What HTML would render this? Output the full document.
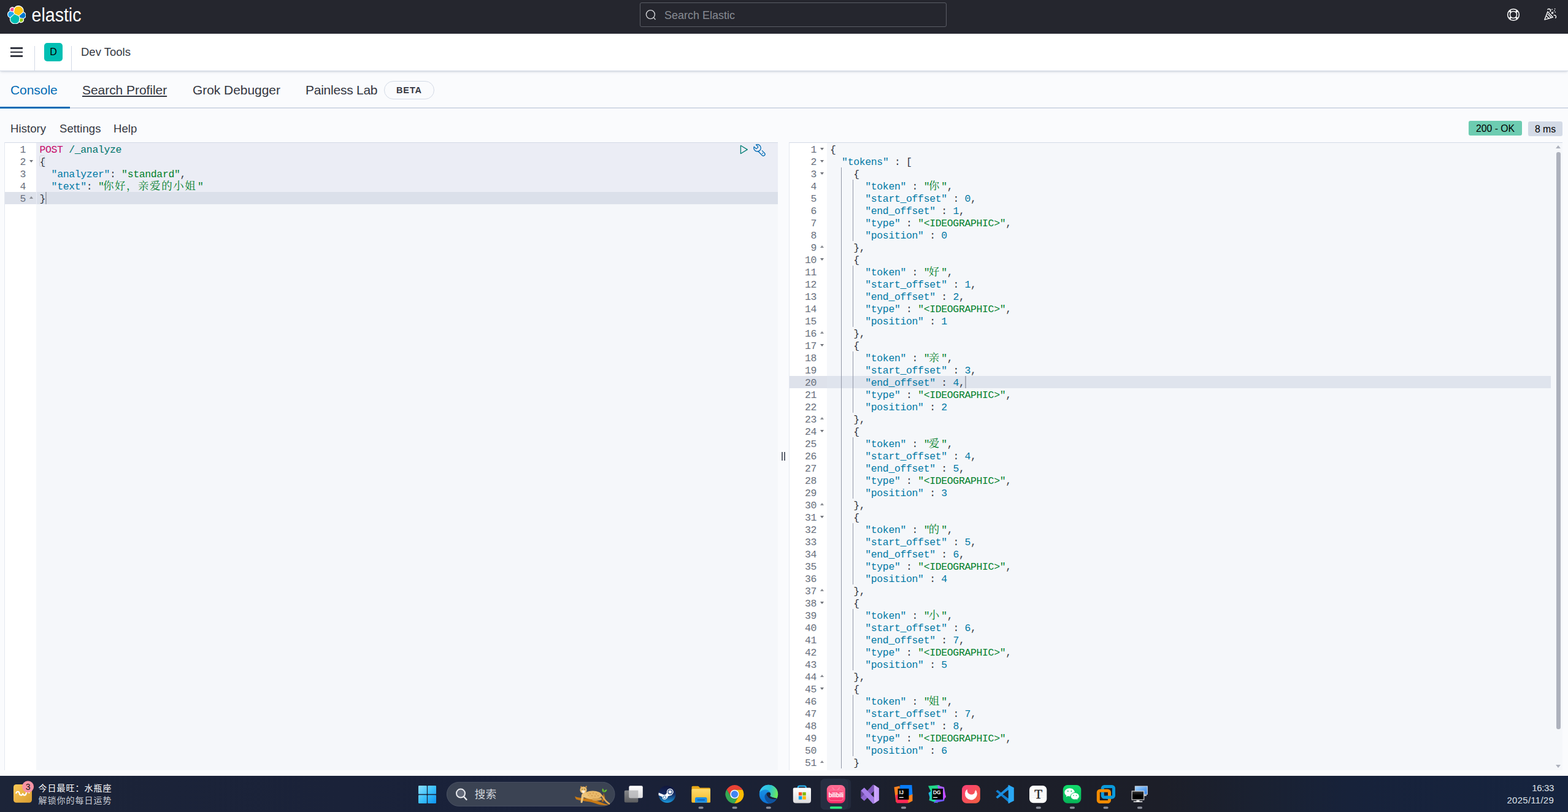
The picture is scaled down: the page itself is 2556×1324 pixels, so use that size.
<!DOCTYPE html>
<html lang="en">
<head>
<meta charset="utf-8">
<title>Dev Tools - Console - Elastic</title>
<style>
*{box-sizing:border-box}
html,body{margin:0;padding:0}
body{width:2556px;height:1324px;overflow:hidden;position:relative;background:#fafbfd;font-family:"Liberation Sans",sans-serif;color:#343741}
.abs{position:absolute}
svg.cjk{display:inline-block;vertical-align:top;overflow:visible}

/* ---------- top dark header ---------- */
#top{position:absolute;left:0;top:0;width:2556px;height:55px;background:#25262e}
#logo{position:absolute;left:11.7px;top:8.7px}
#wordmark{position:absolute;left:51px;top:6px;overflow:visible}
#search{position:absolute;left:1043px;top:4px;width:500px;height:40px;border:1.25px solid #5b5d66;border-radius:3px;background:#25262e}
#search span{position:absolute;left:39px;top:9px;font-size:18px;line-height:22px;color:#878a92;letter-spacing:0}
#search svg{position:absolute;left:6.8px;top:9.1px}

/* ---------- white sub header ---------- */
#sub{position:absolute;left:0;top:55px;width:2556px;height:61px;background:#fff;border-bottom:1px solid #d3dae6;box-shadow:0 2px 3px -1px rgba(152,162,179,.35),0 1px 6px -2px rgba(152,162,179,.3)}
#burger{position:absolute;left:17px;top:22px;width:20px;height:16px}
#burger i{position:absolute;left:0;width:20px;height:2.5px;background:#343741}
.vsep{position:absolute;top:20px;width:1px;height:41px;background:#d3dae6}
#avatar{position:absolute;left:72px;top:15px;width:30px;height:30px;border-radius:5px;background:#00bfb3;color:#000;font-size:16px;line-height:30px;text-align:center}
#crumb{position:absolute;left:132px;top:17.5px;font-size:18.5px;line-height:24px;color:#343741;letter-spacing:0}

/* ---------- tabs ---------- */
#tabs{position:absolute;left:0;top:117px;width:2556px;height:60px}
#tabs .line{position:absolute;left:0;top:58px;width:2556px;height:1.5px;background:#d3dae6}
#tabs .sel{position:absolute;left:0;top:57px;width:114px;height:2.5px;background:#006bb4}
.tab{position:absolute;top:16.5px;font-size:21px;line-height:26px;color:#343741;white-space:nowrap;letter-spacing:-0.05px}
#beta{position:absolute;left:626px;top:15px;width:82px;height:30px;border:1px solid #d3dae6;border-radius:15px;font-size:14.5px;font-weight:bold;line-height:28px;text-align:center;letter-spacing:0.9px;color:#343741}

/* ---------- toolbar ---------- */
.tool{position:absolute;top:199.3px;font-size:18.5px;line-height:22px;color:#343741;white-space:nowrap;letter-spacing:0.08px}
.badge{position:absolute;border-radius:3px;font-size:15.75px;line-height:25px;text-align:center;color:#000;white-space:nowrap}

/* ---------- editors ---------- */
.ed{position:absolute;top:232px;height:1024px;border-top:1px solid #d3dae6;border-left:1px solid #e4e8f0;background:#f5f7fa;overflow:hidden;font-family:"Liberation Mono",monospace;font-size:16.5px;letter-spacing:-0.36px;line-height:20px;color:#343741}
.gut{position:absolute;left:0;top:0;bottom:0;background:#fff}
.gl{position:relative;height:20px;color:#69707d}
.gl b{position:absolute;right:17px;top:2px;font-weight:normal;letter-spacing:-0.36px}
.gl.act{background:#dee2eb}
.gl i{position:absolute;right:5px;width:0;height:0;border-left:3.5px solid transparent;border-right:3.5px solid transparent}
.gl i.fd{top:8px;border-top:4.5px solid #70737a}
.gl i.fu{top:7px;border-bottom:4.5px solid #8a8d93}
.code{position:absolute;top:0;bottom:0;right:0}
.ln{height:20px;line-height:24px;white-space:pre;padding-left:var(--pl,5px);position:relative}
.m{color:#c80a68}.u{color:#00756c}.k{color:#0079a5}.s{color:#00802b}.n{color:#0079a5}.p{color:#343741}
.cj{display:inline-block;position:relative;height:20px;vertical-align:top}
.cjt{position:absolute;left:-1.6px;top:0.7px;font-family:"Liberation Mono","Noto Serif CJK SC",monospace;font-size:17.5px;line-height:21px;letter-spacing:1.55px;white-space:nowrap;color:#00802b}
.ig{position:absolute;width:1px;background:#9297a6}

/* ---------- taskbar ---------- */
#task{position:absolute;left:0;top:1265px;width:2556px;height:59px;background:linear-gradient(90deg,#1c2438 0%,#1a2239 22%,#19213a 36%,#1b2133 50%,#1c1f2a 60%,#1c1e28 74%,#1a2131 80%,#17223a 86%,#16243f 100%);overflow:hidden}
#gap{position:absolute;left:0;top:1256px;width:2556px;height:9px;background:#fbfcfd}
.tcj{font-family:"Liberation Sans","Noto Sans CJK SC",sans-serif;white-space:nowrap}
</style>
</head>
<body>

<!-- ======= dark global header ======= -->
<div id="top">
  <svg id="logo" width="30.6" height="30.6" viewBox="0 0 32 32">
    <path fill="#fff" d="M32 16.77a6.334 6.334 0 00-1.14-3.63 6.298 6.298 0 00-3.05-2.3A9.15 9.15 0 0027.98 9a8.976 8.976 0 00-1.7-5.28A9.008 9.008 0 0021.8.42 8.96 8.96 0 0016.24.39 9.08 9.08 0 0011.7 3.57a4.854 4.854 0 00-5.98-.1 4.85 4.85 0 00-1.7 5.7A6.4 6.4 0 00.99 11.5 6.372 6.372 0 000 15.2c0 1.3.4 2.57 1.15 3.64a6.33 6.33 0 003.05 2.3 8.99 8.99 0 001.53 7.13 8.96 8.96 0 004.48 3.28 8.96 8.96 0 005.56.03 9.04 9.04 0 004.52-3.2 4.84 4.84 0 005.97.11 4.83 4.83 0 001.7-5.7 6.4 6.4 0 003.04-2.32A6.38 6.38 0 0032 16.77"/>
    <path fill="#fec514" d="M12.58 13.787l7.002 3.211 7.066-6.213a7.849 7.849 0 00.152-1.557c0-4.287-3.483-7.775-7.764-7.775a7.76 7.76 0 00-6.406 3.388l-1.176 6.116 1.126 2.83z"/>
    <path fill="#00bfb3" d="M5.333 21.215a7.937 7.937 0 00-.151 1.58c0 4.3 3.492 7.797 7.785 7.797a7.768 7.768 0 006.425-3.407l1.166-6.096-1.556-2.985-7.03-3.215-6.64 6.326z"/>
    <path fill="#f04e98" d="M5.29 9.067l4.8 1.137L11.14 4.73a3.785 3.785 0 00-2.3-.78 3.813 3.813 0 00-3.806 3.81c0 .458.08.9.255 1.307"/>
    <path fill="#1ba9f5" d="M4.873 10.213a5.36 5.36 0 00-3.587 5.043 5.337 5.337 0 003.424 4.99l6.735-6.1-1.237-2.649-5.335-1.284z"/>
    <path fill="#93c90e" d="M20.88 27.184a3.76 3.76 0 002.293.78 3.813 3.813 0 003.807-3.81c0-.459-.08-.9-.255-1.307l-4.795-1.125-1.05 5.462z"/>
    <path fill="#0077cc" d="M21.857 20.563l5.28 1.237a5.381 5.381 0 003.587-5.05 5.347 5.347 0 00-3.432-4.994l-6.906 6.066 1.471 2.741z"/>
  </svg>
  <svg id="wordmark" role="img" aria-label="elastic" width="90" height="34" viewBox="0 0 90 34"><title>elastic</title><text x="0.5" y="28.8" font-family="Liberation Sans, sans-serif" font-size="30.8" fill="#fff" textLength="81" lengthAdjust="spacingAndGlyphs">elastic</text></svg>
  <div id="search">
    <svg width="22" height="22" viewBox="0 0 22 22" fill="none" stroke="#d4d5d8" stroke-width="1.4"><circle cx="9.4" cy="9.6" r="7"/><path d="M14.6 14.6l2.8 3.4"/></svg>
    <span>Search Elastic</span>
  </div>

  <!-- help (lifebuoy) -->
  <svg class="abs" style="left:2455px;top:12px" width="24" height="24" viewBox="-12 -12 24 24" fill="none" stroke="#fff">
    <circle r="9.35" stroke-width="1.5"/><circle r="5.5" stroke-width="1.4"/>
    <g stroke-width="2.9"><path d="M4.2 4.2L6.4 6.4M-4.2 4.2L-6.4 6.4M4.2 -4.2L6.4 -6.4M-4.2 -4.2L-6.4 -6.4"/></g>
  </svg>
  <!-- newsfeed (cheer) -->
  <svg class="abs" style="left:2515px;top:12px" width="24" height="24" viewBox="0 0 24 24" fill="none" stroke="#fff" stroke-width="1.4" stroke-linecap="round" stroke-linejoin="round">
    <path d="M7.9 6.9L16.4 16.2L2.9 20.1Z"/>
    <path d="M6.3 14.6L9.9 18M8.4 11.2L13.4 16.6"/>
    <path d="M7.9 3.4a2.6 2.6 0 0 1 4 3.4"/>
    <path d="M18.2 12.9a2.6 2.6 0 0 1 2.5 4.4"/>
    <path d="M14.6 10l2.3-2.4M14.7 7.7v2.3h2.3" stroke-width="1.2"/>
    <path d="M15 3.4h.1M19.6 2.5h.1M18.8 5.4h.1M20.2 7.8h.1" stroke-width="1.6"/>
  </svg>
</div>

<!-- ======= white header with breadcrumb ======= -->
<div id="sub">
  <div id="burger"><i style="top:0"></i><i style="top:6.5px"></i><i style="top:13px"></i></div>
  <div class="vsep" style="left:56px"></div>
  <div id="avatar">D</div>
  <div class="vsep" style="left:116px"></div>
  <div id="crumb">Dev Tools</div>
</div>

<!-- ======= tabs ======= -->
<div id="tabs">
  <div class="line"></div><div class="sel"></div>
  <div class="tab" style="left:17px;color:#006bb4">Console</div>
  <div class="tab" style="left:134px;text-decoration:underline;text-underline-offset:1.5px;text-decoration-thickness:1.5px">Search Profiler</div>
  <div class="tab" style="left:314px">Grok Debugger</div>
  <div class="tab" style="left:498px;letter-spacing:-0.25px">Painless Lab</div>
  <div id="beta">BETA</div>
</div>

<!-- ======= console toolbar ======= -->
<div class="tool" style="left:17px">History</div>
<div class="tool" style="left:97px">Settings</div>
<div class="tool" style="left:185px">Help</div>
<div class="badge" style="left:2394px;top:197px;width:87px;height:24px;background:#6dccb1">200 - OK</div>
<div class="badge" style="left:2491px;top:198px;width:56px;height:24px;background:#d3dae6">8 ms</div>

<!-- ======= request editor ======= -->
<div class="ed" style="left:7px;width:1261px">
  <div class="gut" style="width:51px"><div class="gl"><b>1</b></div><div class="gl"><b>2</b><i class="fd"></i></div><div class="gl"><b>3</b></div><div class="gl"><b>4</b></div><div class="gl act"><b>5</b><i class="fu"></i></div></div>
  <div class="code" style="left:51px;--pl:5.5px">
    <div class="abs" style="left:0;top:0;right:0;height:100px;background:#ebedf5"></div>
    <div class="abs" style="left:1.2px;top:80px;right:0;height:20px;background:#dbe0ea"></div>
    <div class="abs" style="left:4.8px;top:19.5px;width:9px;height:19px;border:1px solid #d2d5de;border-radius:3px"></div>
    <div class="abs" style="left:15px;top:80px;width:1.9px;height:20px;background:#a6aab5"></div>
    <div class="abs" style="left:0;top:0;right:0"><div class="ln"><span class="m">POST</span> <span class="u">/_analyze</span></div><div class="ln"><span class="p">{</span></div><div class="ln">  <span class="k">"analyzer"</span><span class="p">: </span><span class="s">"standard"</span><span class="p">,</span></div><div class="ln">  <span class="k">"text"</span><span class="p">: </span><span class="s">"</span><span class="cj" style="width:152.40px"><span class="cjt">你好，亲爱的小姐</span></span><span class="s">"</span></div><div class="ln act"><span class="p">}</span></div></div>

    <!-- send request / wrench actions -->
    <svg class="abs" style="left:1147px;top:2px" width="16" height="18" viewBox="0 0 16 18" fill="none" stroke="#017d73" stroke-width="1.3" stroke-linejoin="round"><path d="M1.4 2.3L12.3 8.9L1.4 15.5Z"/></svg>
    <svg class="abs" style="left:1169px;top:2px" width="21" height="21" viewBox="0 0 21 21" fill="none" stroke="#006bb4" stroke-width="1.3" stroke-linejoin="round" stroke-linecap="round">
      <path d="M4.4 1.0L7.3 3.9Q8.1 4.7 7.3 5.5L5.7 7.1Q4.9 7.9 4.1 7.1L1.2 4.2A5.7 5.7 0 1 0 4.4 1.0Z"/>
      <path d="M14.3 10.6L18.4 14.7A2.7 2.7 0 0 1 14.6 18.5L7.9 11.8"/>
      <circle cx="15.1" cy="15.1" r="0.9" fill="#006bb4" stroke="none"/>
    </svg>
  </div>
</div>

<!-- ======= resizer ======= -->
<div class="abs" style="left:1274.3px;top:737px;width:1.4px;height:14px;background:#5f6571"></div>
<div class="abs" style="left:1278.3px;top:737px;width:1.4px;height:14px;background:#5f6571"></div>

<!-- ======= response editor ======= -->
<div class="ed" style="left:1286px;width:1261px">
  <div class="gut" style="width:61px"><div class="gl"><b>1</b><i class="fd"></i></div><div class="gl"><b>2</b><i class="fd"></i></div><div class="gl"><b>3</b><i class="fd"></i></div><div class="gl"><b>4</b></div><div class="gl"><b>5</b></div><div class="gl"><b>6</b></div><div class="gl"><b>7</b></div><div class="gl"><b>8</b></div><div class="gl"><b>9</b><i class="fu"></i></div><div class="gl"><b>10</b><i class="fd"></i></div><div class="gl"><b>11</b></div><div class="gl"><b>12</b></div><div class="gl"><b>13</b></div><div class="gl"><b>14</b></div><div class="gl"><b>15</b></div><div class="gl"><b>16</b><i class="fu"></i></div><div class="gl"><b>17</b><i class="fd"></i></div><div class="gl"><b>18</b></div><div class="gl"><b>19</b></div><div class="gl act"><b>20</b></div><div class="gl"><b>21</b></div><div class="gl"><b>22</b></div><div class="gl"><b>23</b><i class="fu"></i></div><div class="gl"><b>24</b><i class="fd"></i></div><div class="gl"><b>25</b></div><div class="gl"><b>26</b></div><div class="gl"><b>27</b></div><div class="gl"><b>28</b></div><div class="gl"><b>29</b></div><div class="gl"><b>30</b><i class="fu"></i></div><div class="gl"><b>31</b><i class="fd"></i></div><div class="gl"><b>32</b></div><div class="gl"><b>33</b></div><div class="gl"><b>34</b></div><div class="gl"><b>35</b></div><div class="gl"><b>36</b></div><div class="gl"><b>37</b><i class="fu"></i></div><div class="gl"><b>38</b><i class="fd"></i></div><div class="gl"><b>39</b></div><div class="gl"><b>40</b></div><div class="gl"><b>41</b></div><div class="gl"><b>42</b></div><div class="gl"><b>43</b></div><div class="gl"><b>44</b><i class="fu"></i></div><div class="gl"><b>45</b><i class="fd"></i></div><div class="gl"><b>46</b></div><div class="gl"><b>47</b></div><div class="gl"><b>48</b></div><div class="gl"><b>49</b></div><div class="gl"><b>50</b></div><div class="gl"><b>51</b><i class="fu"></i></div></div>
  <div class="code" style="left:61px;--pl:5px">
    <div class="abs" style="left:0;top:380px;right:19px;height:20px;background:#dfe4ed"></div>
    <div class="abs" style="left:0;top:0;right:0"><i class="ig" style="left:23.4px;top:40px;height:980px"></i><i class="ig" style="left:42.2px;top:60px;height:100px"></i><i class="ig" style="left:42.2px;top:200px;height:100px"></i><i class="ig" style="left:42.2px;top:340px;height:100px"></i><i class="ig" style="left:42.2px;top:480px;height:100px"></i><i class="ig" style="left:42.2px;top:620px;height:100px"></i><i class="ig" style="left:42.2px;top:760px;height:100px"></i><i class="ig" style="left:42.2px;top:900px;height:100px"></i></div>
    <div class="abs" style="left:0;top:0;right:0"><div class="ln"><span class="p">{</span></div><div class="ln">  <span class="k">"tokens"</span><span class="p"> : [</span></div><div class="ln">    <span class="p">{</span></div><div class="ln">      <span class="k">"token"</span><span class="p"> : </span><span class="s">"</span><span class="cj" style="width:19.05px"><span class="cjt">你</span></span><span class="s">"</span><span class="p">,</span></div><div class="ln">      <span class="k">"start_offset"</span><span class="p"> : </span><span class="n">0</span><span class="p">,</span></div><div class="ln">      <span class="k">"end_offset"</span><span class="p"> : </span><span class="n">1</span><span class="p">,</span></div><div class="ln">      <span class="k">"type"</span><span class="p"> : </span><span class="s">"&lt;IDEOGRAPHIC&gt;"</span><span class="p">,</span></div><div class="ln">      <span class="k">"position"</span><span class="p"> : </span><span class="n">0</span></div><div class="ln">    <span class="p">},</span></div><div class="ln">    <span class="p">{</span></div><div class="ln">      <span class="k">"token"</span><span class="p"> : </span><span class="s">"</span><span class="cj" style="width:19.05px"><span class="cjt">好</span></span><span class="s">"</span><span class="p">,</span></div><div class="ln">      <span class="k">"start_offset"</span><span class="p"> : </span><span class="n">1</span><span class="p">,</span></div><div class="ln">      <span class="k">"end_offset"</span><span class="p"> : </span><span class="n">2</span><span class="p">,</span></div><div class="ln">      <span class="k">"type"</span><span class="p"> : </span><span class="s">"&lt;IDEOGRAPHIC&gt;"</span><span class="p">,</span></div><div class="ln">      <span class="k">"position"</span><span class="p"> : </span><span class="n">1</span></div><div class="ln">    <span class="p">},</span></div><div class="ln">    <span class="p">{</span></div><div class="ln">      <span class="k">"token"</span><span class="p"> : </span><span class="s">"</span><span class="cj" style="width:19.05px"><span class="cjt">亲</span></span><span class="s">"</span><span class="p">,</span></div><div class="ln">      <span class="k">"start_offset"</span><span class="p"> : </span><span class="n">3</span><span class="p">,</span></div><div class="ln act">      <span class="k">"end_offset"</span><span class="p"> : </span><span class="n">4</span><span class="p">,</span></div><div class="ln">      <span class="k">"type"</span><span class="p"> : </span><span class="s">"&lt;IDEOGRAPHIC&gt;"</span><span class="p">,</span></div><div class="ln">      <span class="k">"position"</span><span class="p"> : </span><span class="n">2</span></div><div class="ln">    <span class="p">},</span></div><div class="ln">    <span class="p">{</span></div><div class="ln">      <span class="k">"token"</span><span class="p"> : </span><span class="s">"</span><span class="cj" style="width:19.05px"><span class="cjt">爱</span></span><span class="s">"</span><span class="p">,</span></div><div class="ln">      <span class="k">"start_offset"</span><span class="p"> : </span><span class="n">4</span><span class="p">,</span></div><div class="ln">      <span class="k">"end_offset"</span><span class="p"> : </span><span class="n">5</span><span class="p">,</span></div><div class="ln">      <span class="k">"type"</span><span class="p"> : </span><span class="s">"&lt;IDEOGRAPHIC&gt;"</span><span class="p">,</span></div><div class="ln">      <span class="k">"position"</span><span class="p"> : </span><span class="n">3</span></div><div class="ln">    <span class="p">},</span></div><div class="ln">    <span class="p">{</span></div><div class="ln">      <span class="k">"token"</span><span class="p"> : </span><span class="s">"</span><span class="cj" style="width:19.05px"><span class="cjt">的</span></span><span class="s">"</span><span class="p">,</span></div><div class="ln">      <span class="k">"start_offset"</span><span class="p"> : </span><span class="n">5</span><span class="p">,</span></div><div class="ln">      <span class="k">"end_offset"</span><span class="p"> : </span><span class="n">6</span><span class="p">,</span></div><div class="ln">      <span class="k">"type"</span><span class="p"> : </span><span class="s">"&lt;IDEOGRAPHIC&gt;"</span><span class="p">,</span></div><div class="ln">      <span class="k">"position"</span><span class="p"> : </span><span class="n">4</span></div><div class="ln">    <span class="p">},</span></div><div class="ln">    <span class="p">{</span></div><div class="ln">      <span class="k">"token"</span><span class="p"> : </span><span class="s">"</span><span class="cj" style="width:19.05px"><span class="cjt">小</span></span><span class="s">"</span><span class="p">,</span></div><div class="ln">      <span class="k">"start_offset"</span><span class="p"> : </span><span class="n">6</span><span class="p">,</span></div><div class="ln">      <span class="k">"end_offset"</span><span class="p"> : </span><span class="n">7</span><span class="p">,</span></div><div class="ln">      <span class="k">"type"</span><span class="p"> : </span><span class="s">"&lt;IDEOGRAPHIC&gt;"</span><span class="p">,</span></div><div class="ln">      <span class="k">"position"</span><span class="p"> : </span><span class="n">5</span></div><div class="ln">    <span class="p">},</span></div><div class="ln">    <span class="p">{</span></div><div class="ln">      <span class="k">"token"</span><span class="p"> : </span><span class="s">"</span><span class="cj" style="width:19.05px"><span class="cjt">姐</span></span><span class="s">"</span><span class="p">,</span></div><div class="ln">      <span class="k">"start_offset"</span><span class="p"> : </span><span class="n">7</span><span class="p">,</span></div><div class="ln">      <span class="k">"end_offset"</span><span class="p"> : </span><span class="n">8</span><span class="p">,</span></div><div class="ln">      <span class="k">"type"</span><span class="p"> : </span><span class="s">"&lt;IDEOGRAPHIC&gt;"</span><span class="p">,</span></div><div class="ln">      <span class="k">"position"</span><span class="p"> : </span><span class="n">6</span></div><div class="ln">    <span class="p">}</span></div></div>
    <div class="abs" style="left:225px;top:380px;width:1.9px;height:20px;background:#a6aab5"></div>
    <!-- scrollbar -->
    <div class="abs" style="right:3.3px;top:15px;width:6.6px;height:941px;border-radius:3.3px;background:#adb1bc"></div>
    <div class="abs" style="right:2.8px;top:3.8px;width:0;height:0;border-left:4.2px solid transparent;border-right:4.2px solid transparent;border-bottom:5.5px solid #adb1bc"></div>
    <div class="abs" style="right:2.8px;top:1014.2px;width:0;height:0;border-left:4.2px solid transparent;border-right:4.2px solid transparent;border-top:5.5px solid #adb1bc"></div>
  </div>
</div>

<!-- ======= windows taskbar ======= -->
<div id="gap"></div>
<div id="task">
  <div class="abs tcj" style="left:62.5px;top:11.3px;line-height:18px;font-size:14px;letter-spacing:1px;color:#ffffff">今日最旺：水瓶座</div>
  <div class="abs tcj" style="left:62.5px;top:31.3px;line-height:18px;font-size:14px;letter-spacing:1px;color:#c9cdd6">解锁你的每日运势</div>
  <svg class="abs" style="left:0;top:0" width="2556" height="59" viewBox="0 0 2556 59" font-family="Liberation Sans, sans-serif">
<defs>
<linearGradient id="gGold" x1="0" y1="0" x2="1" y2="1"><stop offset="0" stop-color="#fbc957"/><stop offset="1" stop-color="#d89c31"/></linearGradient>
<linearGradient id="gWin" gradientUnits="userSpaceOnUse" x1="682" y1="16" x2="711" y2="45"><stop offset="0" stop-color="#8ee0ff"/><stop offset=".5" stop-color="#3cc0fa"/><stop offset="1" stop-color="#0c93f1"/></linearGradient>
<linearGradient id="gSteam" x1="0" y1="0" x2="0" y2="1"><stop offset="0" stop-color="#11163a"/><stop offset=".5" stop-color="#142c63"/><stop offset="1" stop-color="#1b9be0"/></linearGradient>
<linearGradient id="gFold" x1="0" y1="0" x2="0" y2="1"><stop offset="0" stop-color="#ffdb6e"/><stop offset="1" stop-color="#f6ba27"/></linearGradient>
<linearGradient id="gWhite" x1="0" y1="0" x2="0" y2="1"><stop offset="0" stop-color="#ffffff"/><stop offset="1" stop-color="#dcdcde"/></linearGradient>
<linearGradient id="gGray" x1="0" y1="0" x2="0" y2="1"><stop offset="0" stop-color="#86878a"/><stop offset="1" stop-color="#5c5d60"/></linearGradient>
<linearGradient id="gEdgeB" x1="0" y1="0" x2="0" y2="1"><stop offset="0" stop-color="#1e9fea"/><stop offset="1" stop-color="#0a6fd2"/></linearGradient>
<linearGradient id="gEdgeT" gradientUnits="userSpaceOnUse" x1="-15" y1="-6" x2="15" y2="2"><stop offset="0" stop-color="#3ac6f6"/><stop offset=".5" stop-color="#2bc4d4"/><stop offset=".8" stop-color="#56dc86"/><stop offset="1" stop-color="#72f248"/></linearGradient>
<linearGradient id="gBili" x1="0" y1="0" x2="0" y2="1"><stop offset="0" stop-color="#ff7096"/><stop offset="1" stop-color="#fb2a68"/></linearGradient>
<linearGradient id="gRed" x1="0" y1="0" x2="1" y2="1"><stop offset="0" stop-color="#fb3f77"/><stop offset="1" stop-color="#f2603f"/></linearGradient>
<linearGradient id="gWx" x1="0" y1="0" x2="0" y2="1"><stop offset="0" stop-color="#12dc6c"/><stop offset="1" stop-color="#06b457"/></linearGradient>
<linearGradient id="gMon" x1="0" y1="0" x2="1" y2="1"><stop offset="0" stop-color="#a7d8ff"/><stop offset="1" stop-color="#2f7fe6"/></linearGradient>
<linearGradient id="gMonB" x1="0" y1="0" x2="0" y2="1"><stop offset="0" stop-color="#3a3a3a"/><stop offset=".5" stop-color="#000"/><stop offset="1" stop-color="#000"/></linearGradient>
</defs>
<rect x="22" y="14" width="30" height="29.8" rx="4.5" fill="url(#gGold)"/>
<path d="M26.3 28.2c1-3.2 4.6-3.2 5.2 0c.5 4.6 5.4 4.6 5.6 0c.3 4.6 5.2 4.6 5.6 0c.4-3 3.6-3 4.8-.6" fill="none" stroke="#fff" stroke-width="2.1" stroke-linecap="round"/>
<circle cx="45.6" cy="17.7" r="9.5" fill="#f793a4"/>
<text x="45.6" y="22.6" font-size="14" text-anchor="middle" fill="#1a1a1a">3</text>
<rect x="682.00" y="16.00" width="13.85" height="13.85" rx="1.2" fill="url(#gWin)"/>
<rect x="697.15" y="16.00" width="13.85" height="13.85" rx="1.2" fill="url(#gWin)"/>
<rect x="682.00" y="31.15" width="13.85" height="13.85" rx="1.2" fill="url(#gWin)"/>
<rect x="697.15" y="31.15" width="13.85" height="13.85" rx="1.2" fill="url(#gWin)"/>
<rect x="728.4" y="10.4" width="273.6" height="39" rx="19.5" fill="#3b4353" stroke="#4e5667" stroke-width=".9"/>
<circle cx="751" cy="28.6" r="7" fill="#626979" stroke="#e9eaee" stroke-width="2"/><path d="M756.4 34.4l4 4.4" stroke="#e9eaee" stroke-width="2.4" stroke-linecap="round"/>
<g>
<path d="M937 33.5c8 4 20 2 30 5c8 2.4 16 7 25 8.8c-6 1.6-14 .4-22-2.6c-10-3.6-22-3-31-6.400z" fill="#c87a16"/>
<path d="M984 27.500l2.200 8-3 7.500-2.600-1.500 2.400-6.500z" fill="#b9711b"/>
<path d="M983.600 27c-2.400-2-2.400-4.600-1.400-6.600c2.200 1.200 3 3.800 1.400 6.600zM984.400 27c.4-3 2.400-4.600 5-4.800c0 2.600-2 4.600-5 4.800z" fill="#67c22c"/>
<path d="M979.500 31c3 2 5 7 8.500 10.500c2 2 4 3.400 5 4" fill="none" stroke="#e0a856" stroke-width="2.6" stroke-linecap="round"/>
<ellipse cx="966" cy="31.500" rx="14.5" ry="7" fill="#e9b96a"/>
<path d="M955 27c-3 0-6 1.500-7 4l-1.500 11.500c-.2 2 2.600 2.200 3 .4l2-8c3 1.600 7 1.800 10 .6z" fill="#efc47a"/>
<path d="M966 36.500c4 .6 10 .4 14-1l1.500 3.500c-4 1.800-11 2.200-16 1z" fill="#d9a352"/>
<circle cx="951" cy="23" r="5.600" fill="#ecbd70"/><path d="M946 19.500l.8-3 2.600 1.800zM953.800 18l2.400-2 .6 3.400z" fill="#d99d45"/>
<path d="M948.200 24.500c1.600-1 4-1 5.600 0c-.4 2.600-1.400 3.800-2.800 3.800s-2.400-1.200-2.800-3.800z" fill="#fbeed8"/>
<circle cx="949" cy="22" r=".7" fill="#3d5a1e"/><circle cx="953" cy="22" r=".7" fill="#3d5a1e"/>
<g fill="#b9782a"><circle cx="962" cy="29" r=".7"/><circle cx="967" cy="28" r=".7"/><circle cx="972" cy="29.500" r=".7"/><circle cx="965" cy="32.500" r=".7"/><circle cx="970" cy="33" r=".7"/><circle cx="975" cy="32.500" r=".7"/><circle cx="959" cy="32" r=".6"/></g>
</g>
<rect x="1017.8" y="23.8" width="22.5" height="19.600" rx="2" fill="url(#gGray)"/>
<rect x="1025.3" y="16.300" width="22.5" height="20" rx="2.200" fill="url(#gWhite)"/>
<path d="M1025.3 23.800h15v10.500q0 2-2 2h-13z" fill="#9c9da0" opacity=".55"/>
<circle cx="1087.5" cy="30" r="14" fill="url(#gSteam)"/>
<clipPath id="cSt"><circle cx="1087.5" cy="30" r="14"/></clipPath>
<g clip-path="url(#cSt)"><path d="M1072 26.800l10.400 4.300a4 4 0 0 1 2.600-.5l3.600-5.200h3.600l3 5.800-6.600 2.200a4 4 0 0 1-7.800 1.400l-8.800-3.600z" fill="#fff"/></g>
<circle cx="1092.3" cy="26.200" r="5.400" fill="#fff"/><circle cx="1092.3" cy="26.200" r="3.300" fill="none" stroke="#1b3e7c" stroke-width="1.300"/>
<circle cx="1083.300" cy="35" r="3.700" fill="#fff"/><circle cx="1083.300" cy="35" r="2.300" fill="none" stroke="#1c6fb4" stroke-width=".9"/>
<path d="M1127.5 18.600q0-1.800 1.800-1.800h8.200q1 0 1.700.8l1.800 1.900h15.200q1.800 0 1.800 1.800v20.600h-30.500z" fill="#e8a817"/>
<rect x="1127.5" y="21.300" width="30.500" height="22.500" rx="1.600" fill="url(#gFold)"/>
<path d="M1133 43.800v-6.300q0-2.500 2.500-2.500h14.500q2.500 0 2.500 2.500v6.300z" fill="#1d90e6"/><rect x="1136.500" y="38.600" width="12.500" height="1.700" rx=".8" fill="#0b5cb3"/>
<rect x="1138.50" y="50.2" width="8.20" height="3.6" rx="1.8" fill="#8b8f9a"/>
<path d="M1184.63 22.30 A15.00 15.00 0 0 1 1210.60 22.70 L1197.50 22.70 A7.30 7.30 0 0 0 1191.18 33.65 Z" fill="#e94235"/><path d="M1197.27 45.00 A15.00 15.00 0 0 1 1184.63 22.30 L1191.18 33.65 A7.30 7.30 0 0 0 1203.82 33.65 Z" fill="#34a853"/><path d="M1210.60 22.70 A15.00 15.00 0 0 1 1197.27 45.00 L1203.82 33.65 A7.30 7.30 0 0 0 1197.50 22.70 Z" fill="#fbbc04"/><circle cx="1197.50" cy="30.00" r="7.30" fill="#fff"/><circle cx="1197.50" cy="30.00" r="5.75" fill="#4285f4"/>
<rect x="1193.50" y="50.2" width="8.20" height="3.6" rx="1.8" fill="#8b8f9a"/>
<g transform="translate(1252.95 29.95)">
<circle r="15.2" fill="url(#gEdgeB)"/>
<path d="M-14.9-3A15.2 15.2 0 1 1 13.3 7.3C10.8 5.6 6 5.8 2.5 3.200C3.600 1.500 3.400-1 2.500-3.200C1-5.500-1-6.700-3.500-7.300C-7-8.200-11.500-6.800-14.900-3Z" fill="url(#gEdgeT)"/>
<path d="M-3.200-1.900C-6 .5-7.200 3-6.200 6.400C-5.300 10-2.500 13.500.6 14.900A15.200 15.200 0 0 0 12.900 7.900C9 8.600 4 8 .5 6.200C-1.500 5-2.600 2.800-2.900 1.300Z" fill="#10519b"/>
<circle cx="0" cy=".1" r="3.250" fill="#1b2235"/><path d="M-2.900 1.300C-2.500 2.500-1 5 .5 6.200C4 8 9 8.600 12.900 7.900L13.400 7C10.800 5.600 6 5.800 2.500 3.200Z" fill="#1b2235"/>
</g>
<rect x="1248.70" y="50.2" width="8.20" height="3.6" rx="1.8" fill="#8b8f9a"/>
<path d="M1300.800 22v-2.800q0-2.600 2.600-2.600h7.800q2.600 0 2.600 2.600v2.800" fill="none" stroke="#2ab0ec" stroke-width="2.200"/>
<path d="M1292.800 21.600q0-2 2-2h25.200q2 0 2 2v18.500q0 4.500-4.500 4.500h-20.200q-4.500 0-4.500-4.500z" fill="url(#gWhite)"/>
<rect x="1301.900" y="26.800" width="5.400" height="5.400" fill="#f25022"/><rect x="1308.300" y="26.800" width="5.400" height="5.400" fill="#7fba00"/><rect x="1301.900" y="33.200" width="5.400" height="5.400" fill="#00a4ef"/><rect x="1308.300" y="33.200" width="5.400" height="5.400" fill="#ffb900"/>
<rect x="1344" y="5.200" width="43.200" height="49.500" rx="6" fill="#232a3c"/>
<rect x="1338.200" y="5.200" width="43.200" height="49.500" rx="6" fill="#262e41" stroke="#2d3548" stroke-width=".8"/>
<rect x="1347.800" y="15" width="30" height="29.700" rx="7.500" fill="url(#gBili)"/>
<path d="M1357 19.500l3 3.200M1368.500 19.500l-3 3.200" stroke="#ff8fae" stroke-width="1.300" stroke-linecap="round"/><rect x="1351.300" y="23" width="23" height="17.500" rx="4" fill="none" stroke="#ff86a6" stroke-width="1.100" opacity=".8"/>
<text x="1362.800" y="35.300" font-size="10" font-weight="bold" text-anchor="middle" fill="#fff" letter-spacing="-.3" textLength="24" lengthAdjust="spacingAndGlyphs">bilibili</text>
<rect x="1352.800" y="50" width="20" height="3.800" rx="1.900" fill="#2deb80"/>
<path d="M1403.200 35.700L1408.800 40.800L1424.700 24.700V14.800L1423 14.600Z" fill="#7c55b9"/>
<path d="M1403.200 35.700L1408.800 40.800L1416.500 33L1411 27.600Z" fill="#8f67d2"/>
<path d="M1403.200 24.300L1408.800 19.200L1424.700 35.300V45.200L1423 45.400Z" fill="#a57de8"/>
<path d="M1403.200 24.300V35.700L1408.900 30Z" fill="#6a4a9d"/>
<path d="M1424.700 14.800L1432.900 20V40L1424.700 45.200Z" fill="#c8a0fc"/><path d="M1424.700 14.800L1428.500 17.200V42.800L1424.700 45.200Z" fill="#d2adff" opacity=".6"/>
<path d="M1457.500 18.600l9-2 2 24-8 2.400z" fill="#fc801d"/><path d="M1467.500 15h19l1 16-10 5-12-8z" fill="#087cfa"/><path d="M1459.200 32l14-6 13 14-6.500 4.600h-18z" fill="#fe2857"/><path d="M1480 33l7.500-3v11l-7 3.600z" fill="#fc801d"/>
<rect x="1463.500" y="20.900" width="18" height="17.900" fill="#000"/><text x="1465.800" y="29.800" font-size="8.500" font-weight="bold" fill="#fff" letter-spacing=".2">IJ</text><rect x="1465.800" y="34.700" width="7" height="1.300" fill="#fff"/>
<rect x="1468.90" y="50.2" width="8.20" height="3.6" rx="1.8" fill="#8b8f9a"/>
<path d="M1513 16.500l18-1.500 4 6-14 12z" fill="#21d789"/><path d="M1528 15.500l11 3 3 17-9-2z" fill="#a55cf6"/><path d="M1514.500 40l4-18 8 10 2 12.600z" fill="#22d3a0"/><path d="M1522 44.500l17-3.500 2-12-8 2z" fill="#6b57ff"/><path d="M1538 22l3.800 12-4 6z" fill="#d249fc"/><path d="M1513.500 28l5-4-2 14z" fill="#1fc0e8"/>
<rect x="1519.400" y="20.900" width="17.600" height="17.900" fill="#000"/><text x="1521" y="29.800" font-size="8.500" font-weight="bold" fill="#fff" letter-spacing="-.1">DG</text><rect x="1521.200" y="34.700" width="7" height="1.300" fill="#fff"/>
<rect x="1568" y="15" width="29.800" height="29.700" rx="7.500" fill="url(#gRed)"/>
<path d="M1576.500 21.800A9.900 9.900 0 1 0 1589.800 22.200L1590.600 24.300L1589.400 24L1590 26L1588.600 25.600L1588.900 27.400A6.600 6.600 0 0 1 1576.900 25.600Z" fill="#fff"/>
<path d="M1623.300 25.200l2.800-2.300 20 15.600v6.400z" fill="#0f7fd0"/><path d="M1623.300 34.800l2.800 2.300 20-15.600v-6.400z" fill="#1b8fe0"/>
<path d="M1643.500 14.800l9.300 4.500v21.400l-9.300 4.500z" fill="#2aa8f4"/><path d="M1643.500 23.200v13.600l-8.800-6.800z" fill="#1c1f2a"/>
<rect x="1678" y="16" width="28.300" height="28.200" rx="6.500" fill="#fdfdfd"/><path d="M1682 24.500h20M1682 28h20M1682 31.500h20M1682 35h20" stroke="#ececec" stroke-width=".8"/>
<text x="1692.600" y="36.600" font-family="Liberation Serif, serif" font-size="21" text-anchor="middle" fill="#222" stroke="#222" stroke-width=".4">T</text>
<rect x="1688.70" y="50.2" width="8.20" height="3.6" rx="1.8" fill="#8b8f9a"/>
<rect x="1732.800" y="15" width="29.500" height="29.700" rx="7.500" fill="url(#gWx)"/>
<path d="M1743.600 20.200c-4.600 0-8.200 3-8.200 6.700c0 2.100 1.200 4 3.100 5.200l-.8 2.500 3-1.500c.9.300 1.900.4 2.900.4c4.600 0 8.200-3 8.200-6.700s-3.600-6.600-8.200-6.600z" fill="#fff"/>
<path d="M1752.300 27.500c-3.900 0-7 2.600-7 5.700s3.100 5.700 7 5.700c.8 0 1.600-.1 2.300-.3l2.500 1.300-.6-2.100c1.700-1 2.800-2.700 2.800-4.600c0-3.100-3.100-5.700-7-5.700z" fill="#fff" stroke="#0cc863" stroke-width="1"/>
<g fill="#0cc863"><circle cx="1740.800" cy="25" r="1"/><circle cx="1746.400" cy="25" r="1"/><circle cx="1750" cy="32" r=".85"/><circle cx="1754.600" cy="32" r=".85"/></g>
<rect x="1743.80" y="50.2" width="8.20" height="3.6" rx="1.8" fill="#8b8f9a"/>
<rect x="1797.300" y="17.500" width="18.200" height="17.600" rx="2.800" fill="none" stroke="#0a9bdc" stroke-width="5"/>
<rect x="1790.300" y="24.200" width="18.200" height="18.300" rx="2.800" fill="none" stroke="#f38b00" stroke-width="5"/>
<path d="M1803.500 35.100h9.500" stroke="#0a9bdc" stroke-width="5"/>
<rect x="1798.50" y="50.2" width="8.20" height="3.6" rx="1.8" fill="#8b8f9a"/>
<rect x="1850.300" y="17" width="20" height="13.200" fill="url(#gMon)" stroke="#d9dde2" stroke-width="1"/><rect x="1864" y="31" width="5" height="2" fill="#b5b8bc"/>
<rect x="1845.200" y="25" width="19.500" height="14" fill="url(#gMonB)" stroke="#d4d4d4" stroke-width="1.200"/><rect x="1852.500" y="39.600" width="5" height="2.300" fill="#e9e9e9"/><rect x="1847.500" y="41.600" width="15" height="1.400" rx=".7" fill="#f2f2f2"/>
<rect x="1853.90" y="50.2" width="8.20" height="3.6" rx="1.8" fill="#8b8f9a"/>
</svg>
  <div class="abs tcj" style="left:773.75px;top:20.2px;line-height:21px;font-size:17.5px;letter-spacing:0.5px;color:#d5d8de">搜索</div>
  <div class="abs" style="right:23px;top:11px;font-size:15px;line-height:18px;color:#dfe2e8;text-align:right;letter-spacing:-0.35px">16:33</div>
  <div class="abs" style="right:23px;top:31px;font-size:15px;line-height:18px;color:#dfe2e8;text-align:right;letter-spacing:0.25px">2025/11/29</div>
</div>
</body>
</html>
